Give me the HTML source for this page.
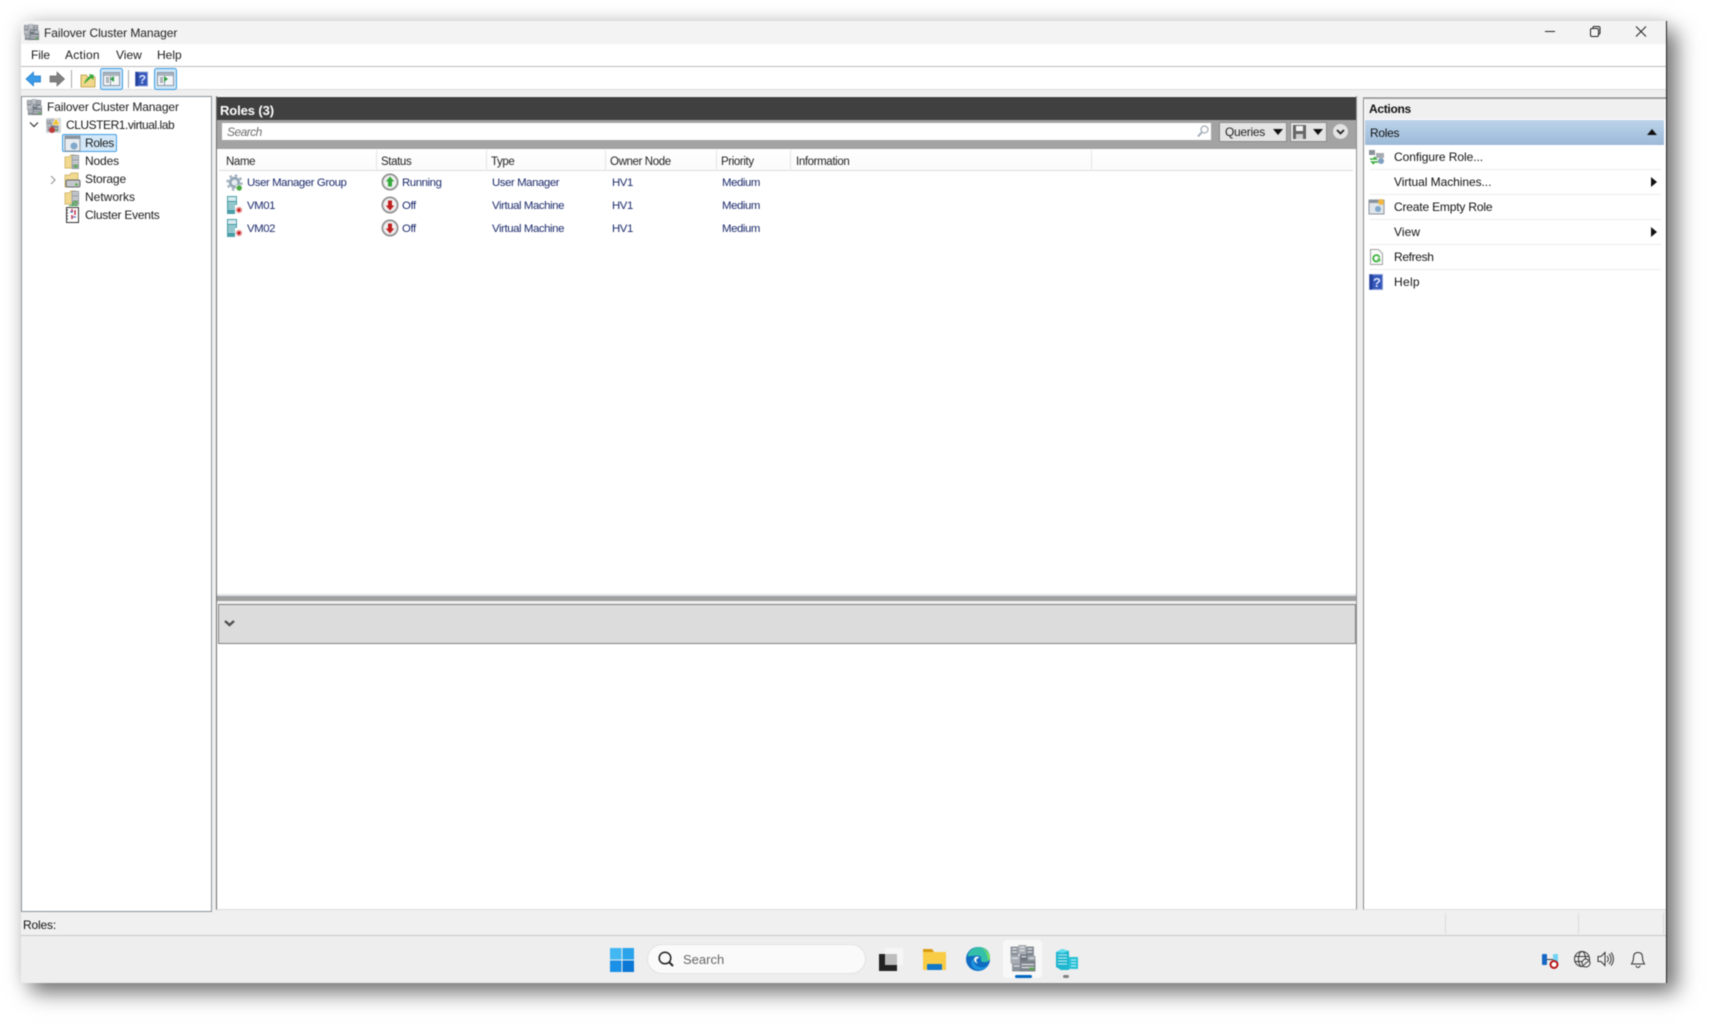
<!DOCTYPE html>
<html><head><meta charset="utf-8"><title>Failover Cluster Manager</title>
<style>
html,body{margin:0;padding:0;width:1709px;height:1025px;overflow:hidden;background:#fff}
#stage{position:absolute;left:0;top:0;width:1709px;height:1025px;filter:blur(.45px)}
#stage div,#stage span.t,#stage svg{position:absolute}
.t{position:absolute;font:12px/16px "Liberation Sans",sans-serif;color:#1a1a1a;white-space:nowrap}
.n{color:#1b2a6b;font-size:11.4px;letter-spacing:-.42px}
.h{color:#222;font-size:11.5px;letter-spacing:-.38px}
.a{color:#111;letter-spacing:-.06px}
</style></head><body>
<svg width="0" height="0" style="position:absolute">
<defs>
<symbol id="srv" viewBox="0 0 18 18"><rect x="1" y="1" width="5" height="6" fill="#8b9199"/><rect x="6" y="0" width="5" height="6" fill="#a7acb2"/><rect x="11" y="1" width="5" height="6" fill="#7f868e"/><rect x="1" y="7" width="6" height="5" fill="#a7acb2"/><rect x="7" y="6" width="5" height="5" fill="#6f767e"/><rect x="12" y="7" width="5" height="5" fill="#9ba1a8"/><rect x="2" y="12" width="7" height="5" fill="#8b9199"/><rect x="7" y="10" width="10" height="7" fill="#7b8289"/><path d="M2 2.500h3M7 1.500h3M12 2.500h3M2 4.500h3M7 3.500h3M12 4.500h3M2 8.500h4M8 7.500h3M13 8.500h3M3 13.500h4M8 12.500h8M8 14.500h8" stroke="#e1e4e7" stroke-width=".8"/><rect x="13" y="14.500" width="3" height="1.500" fill="#57a84a"/></symbol>
<symbol id="gear" viewBox="0 0 18 18"><circle cx="8.500" cy="8.500" r="4.300" fill="#e9eef2" stroke="#96a8b8" stroke-width="2.800"/><circle cx="8.500" cy="8.500" r="7" fill="none" stroke="#a3b2bf" stroke-width="2.400" stroke-dasharray="2.600 2.900"/><rect x="10" y="11" width="7" height="7" rx="1" fill="#fff"/><circle cx="13.200" cy="14" r="2.700" fill="#4aa83f"/></symbol>
<symbol id="vm" viewBox="0 0 18 18"><rect x="1" y="0" width="10" height="18" fill="#4a9fa8"/><rect x="2" y="1" width="8" height="4" fill="#d8eaee"/><path d="M2 7h8M2 9h8M2 11h8M2 13h8" stroke="#d8ecef"/><rect x="9" y="9" width="9" height="9" fill="#fff"/><circle cx="13" cy="14" r="3.200" fill="#e7a0a0"/><circle cx="13" cy="14" r="1.600" fill="#c81e1e"/></symbol>
<symbol id="up" viewBox="0 0 18 18"><circle cx="9" cy="9" r="7.700" fill="#e0e0e0" stroke="#8a8a8a" stroke-width="1.500"/><circle cx="9" cy="9" r="5.700" fill="#f2f2f2"/><path d="M9 3.500l4.300 5H11v5H7v-5H4.700z" fill="#34a83a"/></symbol>
<symbol id="down" viewBox="0 0 18 18"><circle cx="9" cy="9" r="7.700" fill="#e0e0e0" stroke="#8a8a8a" stroke-width="1.500"/><circle cx="9" cy="9" r="5.700" fill="#f2f2f2"/><path d="M9 14.500l-4.300-5H7v-5h4v5h2.300z" fill="#c01f1f"/></symbol>
<symbol id="fold" viewBox="0 0 18 18"><path d="M1 4h5l1-2h5v14H1z" fill="#f1d98f" stroke="#c7a95a" stroke-width=".7"/><rect x="8" y="2" width="8" height="15" fill="#9aa1a8"/><path d="M9 4h6M9 6h6M9 9h6M9 11h6" stroke="#e3e6e8"/><rect x="11" y="12.500" width="3" height="3" fill="#5bb04d"/></symbol>
<symbol id="help" viewBox="0 0 14 16"><rect x=".5" y=".5" width="13" height="15" fill="#3558ba" stroke="#8ea0d8"/><rect x=".5" y=".5" width="3" height="15" fill="#24409c"/><text x="4" y="13" font-family="Liberation Sans" font-size="13" font-weight="bold" fill="#dfe6ff">?</text></symbol>
<symbol id="pane" viewBox="0 0 17 14"><rect x=".5" y=".5" width="16" height="13" fill="#f4f6f8" stroke="#8e9aa6"/><rect x="1" y="1" width="15" height="3" fill="#aab4be"/><path d="M3 6h3M3 8h3M3 10h3" stroke="#66727e"/><path d="M7.500 4v9" stroke="#8e9aa6"/></symbol>
</defs></svg>
<div id="stage">
<!-- window -->
<div style="left:21px;top:21px;width:1645px;height:962px;background:#fff;box-shadow:10px 10px 20px rgba(0,0,0,.52),0 0 20px rgba(0,0,0,.13);border-right:1.500px solid #222;box-sizing:content-box"></div>
<div style="left:21px;top:21px;width:1645px;height:23px;background:#f3f3f3"></div>
<div style="left:21px;top:66px;width:1645px;height:1px;background:#bdbdbd"></div>
<div style="left:21px;top:89px;width:1645px;height:7px;background:#f0f0f0;border-top:1px solid #dcdcdc;box-sizing:border-box"></div>
<!-- title -->
<svg style="left:23px;top:24px" width="17" height="17"><use href="#srv" width="17" height="17"/></svg>
<span class="t" style="left:44px;top:25px;letter-spacing:-.06px;color:#222">Failover Cluster Manager</span>
<svg style="left:1540px;top:24px" width="120" height="16" fill="none" stroke="#222"><path d="M5 7.500h10"/><rect x="50.500" y="4.500" width="8" height="8" rx="1.500"/><path d="M53 4.500v-1a1 1 0 0 1 1-1h4.500a1.500 1.500 0 0 1 1.500 1.500v5a1 1 0 0 1-1 1h-1"/><path d="M96 2.500l10 10M106 2.500l-10 10"/></svg>
<!-- menu -->
<span class="t" style="left:31px;top:47px;letter-spacing:-.1px">File</span>
<span class="t" style="left:65px;top:47px;letter-spacing:.25px">Action</span>
<span class="t" style="left:116px;top:47px">View</span>
<span class="t" style="left:157px;top:47px">Help</span>
<!-- toolbar -->
<svg style="left:24px;top:68px" width="160" height="22">
<path d="M2 11l7.500-7v4h7v6h-7v4z" fill="#3a9be8" stroke="#1d78c8" stroke-width=".7"/>
<path d="M40.500 11l-7.500-7v4h-7v6h7v4z" fill="#808080" stroke="#6a6a6a" stroke-width=".7"/>
<path d="M47.500 2v18" stroke="#a8a8a8"/>
<path d="M57 7h5l2 2h7v10H57z" fill="#f0d88a" stroke="#b8983e" stroke-width=".8"/>
<path d="M60 16c1-4 3-6 6-8l-1-2 5 1-1 5-1.500-2c-2 1-4 3-7.500 6z" fill="#3aa83a"/>
<rect x="76.500" y=".5" width="22" height="21" rx="2" fill="#cde6f7" stroke="#3a9ae0"/>
<use href="#pane" x="79" y="4" width="17" height="14"/>
<path d="M90 8v6l-4-3z" fill="#2f9d3f"/>
<path d="M104.500 2v18" stroke="#a8a8a8"/>
<use href="#help" x="111" y="3" width="13" height="16"/>
<rect x="130.500" y=".5" width="22" height="21" rx="2" fill="#cde6f7" stroke="#3a9ae0"/>
<use href="#pane" x="133" y="4" width="17" height="14"/>
<path d="M140 8v6l4-3z" fill="#2f9d3f"/>
</svg>
<!-- tree panel -->
<div style="left:21px;top:96px;width:191px;height:816px;background:#fff;border:1px solid #8b939b;box-sizing:border-box"></div>
<svg style="left:26px;top:99px" width="17" height="17"><use href="#srv" width="17" height="17"/></svg>
<span class="t" style="left:47px;top:99px;letter-spacing:-.12px">Failover Cluster Manager</span>
<svg style="left:28px;top:119px" width="12" height="12" fill="none" stroke="#333" stroke-width="1.200"><path d="M2 3.500l4 4 4-4"/></svg>
<svg style="left:45px;top:117px" width="17" height="17"><rect x="1" y="1" width="15" height="15" fill="#d5d9dd"/><use href="#srv" width="13" height="13" x="1" y="2"/><path d="M11 1l4 7H7z" fill="#f0c430" stroke="#fff" stroke-width=".6"/><circle cx="7" cy="13" r="3" fill="#c23a3a"/></svg>
<span class="t" style="left:66px;top:117px;letter-spacing:-.46px">CLUSTER1.virtual.lab</span>
<div style="left:62px;top:134px;width:55px;height:18px;background:#d2e8f8;border:1px solid #3f9fe3;border-radius:2px;box-sizing:border-box"></div>
<svg style="left:64px;top:135px" width="17" height="17"><rect x="1" y="1" width="15" height="15" fill="#e8ecf0" stroke="#8a949e"/><rect x="1" y="1" width="15" height="3" fill="#8a949e"/><circle cx="10" cy="11" r="3.500" fill="#7fa8cc"/></svg>
<span class="t" style="left:85px;top:135px;letter-spacing:-.35px">Roles</span>
<svg style="left:64px;top:153px" width="17" height="17"><use href="#fold" width="17" height="17"/></svg>
<span class="t" style="left:85px;top:153px;letter-spacing:-.15px">Nodes</span>
<svg style="left:47px;top:174px" width="12" height="12" fill="none" stroke="#999" stroke-width="1.200"><path d="M4 2l4 4-4 4"/></svg>
<svg style="left:64px;top:171px" width="17" height="17"><path d="M1 4h5l1-2h7v14H1z" fill="#f1d98f" stroke="#c7a95a" stroke-width=".7"/><rect x="2" y="9" width="14" height="7" rx="1.500" fill="#c4c8cc" stroke="#666"/><rect x="11" y="12.500" width="3" height="2" fill="#5bb04d"/></svg>
<span class="t" style="left:85px;top:171px;letter-spacing:-.15px">Storage</span>
<svg style="left:64px;top:189px" width="17" height="17"><use href="#fold" width="17" height="17"/><path d="M9 13v3M5 16.500h9" stroke="#37a846"/></svg>
<span class="t" style="left:85px;top:189px">Networks</span>
<svg style="left:65px;top:207px" width="15" height="17"><rect x="1.500" y=".5" width="12" height="15" fill="#fff" stroke="#333"/><path d="M1 3h2M1 6h2M1 9h2M1 12h2" stroke="#333"/><path d="M7 2v3M10 3v5M7 8v4" stroke="#c22d4a" stroke-width="1.500"/><path d="M5 5h3M8 10h3" stroke="#2d57c2"/></svg>
<span class="t" style="left:85px;top:207px;letter-spacing:-.25px">Cluster Events</span>
<!-- middle panel -->
<div style="left:212px;top:96px;width:4px;height:816px;background:#efefef"></div>
<div style="left:216px;top:96px;width:1141px;height:814px;background:#fff;border-left:1.500px solid #6c6c6c;border-right:1px solid #8f8f8f;border-bottom:1px solid #dedede;box-sizing:border-box"></div>
<div style="left:217px;top:97px;width:1139px;height:23px;background:#404040"></div>
<span class="t" style="left:220px;top:103px;color:#fff;font-weight:bold;font-size:13px;letter-spacing:-.1px">Roles (3)</span>
<div style="left:217px;top:120px;width:1139px;height:29px;background:#a3a3a3"></div>
<div style="left:222px;top:123px;width:989px;height:17px;background:#fff"></div>
<span class="t" style="left:227px;top:124px;font-style:italic;color:#6f6f6f;letter-spacing:-.55px">Search</span>
<svg style="left:1196px;top:124px" width="14" height="15" fill="none" stroke="#a5aeb8"><circle cx="8.500" cy="5.500" r="3.500" stroke-width="1.300"/><path d="M6 8l-4 4.500" stroke-width="2"/></svg>
<div style="left:1219px;top:122px;width:68px;height:20px;background:#e4e4e4;border:1px solid #8a8a8a;box-sizing:border-box"></div>
<span class="t" style="left:1225px;top:124px;color:#222;letter-spacing:-.3px">Queries</span>
<svg style="left:1272px;top:128px" width="12" height="8"><path d="M1 1h10L6 7z" fill="#111"/></svg>
<div style="left:1290px;top:122px;width:37px;height:20px;background:#e4e4e4;border:1px solid #8a8a8a;box-sizing:border-box"></div>
<svg style="left:1292px;top:124px" width="16" height="16"><rect x="1" y="1" width="13" height="14" fill="#666"/><rect x="4" y="2" width="7" height="5" fill="#f4f4f4"/><rect x="4" y="10" width="7" height="5" fill="#cfcfcf"/></svg>
<svg style="left:1312px;top:128px" width="12" height="8"><path d="M1 1h10L6 7z" fill="#111"/></svg>
<svg style="left:1332px;top:123px" width="17" height="17"><circle cx="8.500" cy="8.500" r="7.500" fill="#e3e3e3"/><path d="M5 7l3.500 3.500L12 7" fill="none" stroke="#222" stroke-width="1.800"/></svg>
<!-- table header -->
<div style="left:219px;top:149px;width:1134px;height:22px;background:linear-gradient(#fff,#fbfbfb);border-bottom:1px solid #dedede;box-sizing:border-box"></div>
<div style="left:376px;top:150px;width:1px;height:21px;background:#e4e4e4"></div>
<div style="left:486px;top:150px;width:1px;height:21px;background:#e4e4e4"></div>
<div style="left:605px;top:150px;width:1px;height:21px;background:#e4e4e4"></div>
<div style="left:716px;top:150px;width:1px;height:21px;background:#e4e4e4"></div>
<div style="left:790px;top:150px;width:1px;height:21px;background:#e4e4e4"></div>
<div style="left:1091px;top:150px;width:1px;height:21px;background:#e4e4e4"></div>
<span class="t h" style="left:226px;top:154px">Name</span>
<span class="t h" style="left:381px;top:154px">Status</span>
<span class="t h" style="left:491px;top:154px">Type</span>
<span class="t h" style="left:610px;top:154px">Owner Node</span>
<span class="t h" style="left:721px;top:154px">Priority</span>
<span class="t h" style="left:796px;top:154px">Information</span>
<!-- rows -->
<svg style="left:226px;top:174px" width="18" height="18"><use href="#gear" width="18" height="18"/></svg>
<span class="t n" style="left:247px;top:175px">User Manager Group</span>
<svg style="left:381px;top:173px" width="18" height="18"><use href="#up" width="18" height="18"/></svg>
<span class="t n" style="left:402px;top:175px">Running</span>
<span class="t n" style="left:492px;top:175px">User Manager</span>
<span class="t n" style="left:612px;top:175px">HV1</span>
<span class="t n" style="left:722px;top:175px">Medium</span>
<svg style="left:226px;top:196px" width="18" height="18"><use href="#vm" width="18" height="18"/></svg>
<span class="t n" style="left:247px;top:198px">VM01</span>
<svg style="left:381px;top:196px" width="18" height="18"><use href="#down" width="18" height="18"/></svg>
<span class="t n" style="left:402px;top:198px">Off</span>
<span class="t n" style="left:492px;top:198px">Virtual Machine</span>
<span class="t n" style="left:612px;top:198px">HV1</span>
<span class="t n" style="left:722px;top:198px">Medium</span>
<svg style="left:226px;top:219px" width="18" height="18"><use href="#vm" width="18" height="18"/></svg>
<span class="t n" style="left:247px;top:221px">VM02</span>
<svg style="left:381px;top:219px" width="18" height="18"><use href="#down" width="18" height="18"/></svg>
<span class="t n" style="left:402px;top:221px">Off</span>
<span class="t n" style="left:492px;top:221px">Virtual Machine</span>
<span class="t n" style="left:612px;top:221px">HV1</span>
<span class="t n" style="left:722px;top:221px">Medium</span>
<!-- splitter -->
<div style="left:217px;top:594px;width:1139px;height:2px;background:#dfe3e8"></div>
<div style="left:217px;top:596px;width:1139px;height:5px;background:#a0a0a0"></div>
<div style="left:217px;top:601px;width:1139px;height:3px;background:#efefef"></div>
<div style="left:218px;top:604px;width:1138px;height:40px;background:#dcdcdc;border:1px solid #808080;box-sizing:border-box"></div>
<svg style="left:223px;top:619px" width="13" height="9"><path d="M2 2l4.500 4L11 2" fill="none" stroke="#505050" stroke-width="2.400"/></svg>
<!-- actions panel -->
<div style="left:1357px;top:96px;width:6px;height:816px;background:#efefef"></div>
<div style="left:1363px;top:97px;width:303px;height:813px;background:#fff;border-left:1.500px solid #8a8a8a;border-bottom:1px solid #dedede;box-sizing:border-box"></div>
<div style="left:1363px;top:97px;width:303px;height:2px;background:#a0a0a0"></div>
<div style="left:1365px;top:99px;width:300px;height:20px;background:#f0f0f0"></div>
<span class="t" style="left:1369px;top:101px;font-weight:bold;color:#111;letter-spacing:-.3px">Actions</span>
<div style="left:1365px;top:120px;width:299px;height:25px;background:linear-gradient(#bcd4ea,#9cb9d8)"></div>
<span class="t a" style="left:1370px;top:125px;letter-spacing:-.3px">Roles</span>
<svg style="left:1646px;top:128px" width="12" height="8"><path d="M6 1l5 6H1z" fill="#111"/></svg>
<div style="left:1370px;top:169px;width:291px;height:1px;background:#ececec"></div>
<div style="left:1370px;top:194px;width:291px;height:1px;background:#ececec"></div>
<div style="left:1370px;top:219px;width:291px;height:1px;background:#ececec"></div>
<div style="left:1370px;top:244px;width:291px;height:1px;background:#ececec"></div>
<div style="left:1370px;top:269px;width:291px;height:1px;background:#ececec"></div>
<svg style="left:1368px;top:149px" width="17" height="16"><rect x="1" y="1" width="6" height="5" fill="#8b9199"/><rect x="8" y="4" width="8" height="5" fill="#a7acb2"/><path d="M2 10h6l-2-2M10 13H4l2 2" fill="none" stroke="#3aa83a" stroke-width="1.600"/><circle cx="13" cy="12" r="3" fill="#7fa0c0"/></svg>
<span class="t a" style="left:1394px;top:149px">Configure Role...</span>
<span class="t a" style="left:1394px;top:174px">Virtual Machines...</span>
<svg style="left:1650px;top:176px" width="8" height="12"><path d="M1 1l6 5-6 5z" fill="#111"/></svg>
<svg style="left:1368px;top:199px" width="17" height="16"><rect x="1" y="1" width="15" height="14" fill="#dfe5ea" stroke="#8a949e"/><rect x="1" y="1" width="15" height="3" fill="#8a949e"/><circle cx="10" cy="10" r="3" fill="#7fa8cc"/><circle cx="13" cy="3" r="3" fill="#f0b840"/></svg>
<span class="t a" style="left:1394px;top:199px;letter-spacing:-.18px">Create Empty Role</span>
<span class="t a" style="left:1394px;top:224px;letter-spacing:.1px">View</span>
<svg style="left:1650px;top:226px" width="8" height="12"><path d="M1 1l6 5-6 5z" fill="#111"/></svg>
<svg style="left:1369px;top:249px" width="15" height="16"><path d="M1.500.5h8l4 4v11h-12z" fill="#fafafa" stroke="#a0a0a0"/><path d="M10.500 8.500a3.200 3.200 0 1 0-1 3.200" fill="none" stroke="#34b234" stroke-width="1.700"/><path d="M8 10l3-1 .5 4z" fill="#34b234"/></svg>
<span class="t a" style="left:1394px;top:249px;letter-spacing:-.35px">Refresh</span>
<svg style="left:1369px;top:274px" width="14" height="16"><use href="#help" width="14" height="16"/></svg>
<span class="t a" style="left:1394px;top:274px;letter-spacing:.3px">Help</span>
<!-- status bar -->
<div style="left:21px;top:912px;width:1645px;height:24px;background:#f0f0f0;border-bottom:1px solid #c8c8c8;box-sizing:border-box"></div>
<div style="left:21px;top:910px;width:1645px;height:2px;background:#f0f0f0"></div>
<div style="left:21px;top:905px;width:191px;height:7px;background:#fff;border:1px solid #8b939b;border-top:0;box-sizing:border-box"></div>
<div style="left:1445px;top:913px;width:1px;height:21px;background:#dadada"></div>
<div style="left:1578px;top:913px;width:1px;height:21px;background:#dadada"></div>
<div style="left:1663px;top:913px;width:1px;height:21px;background:#dadada"></div>
<span class="t a" style="left:23px;top:917px;letter-spacing:-.17px">Roles:</span>
<!-- taskbar -->
<div style="left:21px;top:936px;width:1645px;height:47px;background:#eeeeee"></div>
<svg style="left:610px;top:948px" width="24" height="24"><rect x="0" y="0" width="11.500" height="11.500" fill="#43b7f2"/><rect x="12.500" y="0" width="11.500" height="11.500" fill="#2aa3ea"/><rect x="0" y="12.500" width="11.500" height="11.500" fill="#1a90e6"/><rect x="12.500" y="12.500" width="11.500" height="11.500" fill="#0a78d4"/></svg>
<div style="left:647px;top:944px;width:219px;height:30px;background:#fafafa;border:1px solid #e2e2e2;border-radius:15px;box-sizing:border-box"></div>
<svg style="left:657px;top:950px" width="18" height="18" fill="none" stroke="#222" stroke-width="1.500"><circle cx="8" cy="8" r="5.800"/><path d="M12.200 12.200L16 16" stroke-width="2"/></svg>
<span class="t" style="left:683px;top:952px;font-size:13px;color:#666">Search</span>
<svg style="left:878px;top:947px" width="26" height="25"><rect x="7" y="1" width="18" height="17" fill="#f6f6f6"/><rect x="1" y="7" width="18" height="17" fill="#222"/><rect x="7" y="7" width="12" height="11" fill="#bdbdbd"/></svg>
<svg style="left:922px;top:948px" width="25" height="23"><path d="M1 1h9l2 3h12v18H1z" fill="#f9cc45"/><path d="M1 1h9l2 3H1z" fill="#d99a12"/><rect x="5" y="16" width="15" height="6" rx="1" fill="#0f76c9"/></svg>
<svg style="left:965px;top:946px" width="26" height="26"><circle cx="13" cy="13" r="12" fill="#0f6cc2"/><path d="M2.500 10C4 4 9 1 14 1c3 0 6 1 8 3 2 2 3 5 3 8 0 1-.5 2-1.500 3-1.500 1-4 1.500-6 1-1.500-.5-2-1.500-1.500-3 .5-2-1-3.500-3.500-3.500-4 0-7 1-10.500.5z" fill="#33bfa8"/><path d="M17 2c4 1.500 7 5 8 9 0 2-1 3-2 4 0-5-2-10-6-13z" fill="#7fdc5c"/><path d="M8.500 12c-1 5 3 9.500 8.500 9.500 2 0 4-.7 5.500-2-3 4.500-9 5.500-13 3-4-2.500-4-8-1-10.500z" fill="#1f97e0"/><path d="M12 10.500c-1.800 0-3.200 1.500-3 3.500.2 1.800 2 3 4 3.500-1.500-1.500-2-3-1.500-4 .4-1 1.500-1.500 3-1.500-.5-1-1.500-1.500-2.500-1.500z" fill="#eef6f8"/></svg>
<div style="left:1003px;top:940px;width:39px;height:38px;background:#f8f8f8;border-radius:4px"></div>
<svg style="left:1009px;top:945px" width="28" height="28"><use href="#srv" width="28" height="28"/></svg>
<div style="left:1015px;top:975px;width:17px;height:3px;background:#0067c0;border-radius:2px"></div>
<svg style="left:1055px;top:945px" width="24" height="25"><path d="M1 7l6-3 7 2v19H6l-5-3z" fill="#1fb6cf"/><path d="M1 7l6-3 7 2-6 2z" fill="#5fdcec"/><path d="M3 10h9M3 13h9M3 16h9M3 19h9" stroke="#c6f0f6"/><rect x="14" y="12" width="9" height="12" fill="#2ac2d6"/><path d="M16 15h5M16 18h5M16 21h5" stroke="#c6f0f6"/></svg>
<div style="left:1063px;top:975px;width:6px;height:2.500px;background:#808080;border-radius:2px"></div>
<!-- tray -->
<svg style="left:1541px;top:952px" width="19" height="18"><rect x="1" y="2" width="5" height="11" rx="1" fill="#1668c4"/><rect x="12" y="2" width="5" height="11" rx="1" fill="#6fd3f5"/><path d="M6 7.500h6" stroke="#333"/><circle cx="13" cy="12.500" r="3.500" fill="#fff" stroke="#b81414" stroke-width="2"/></svg>
<svg style="left:1573px;top:950px" width="18" height="18" fill="none" stroke="#333"><circle cx="9" cy="9" r="7.500"/><ellipse cx="9" cy="9" rx="3.500" ry="7.500"/><path d="M2 6.500h14M2 11.500h14"/><circle cx="13" cy="13" r="4" fill="#eee"/><path d="M10.500 15l5-4"/></svg>
<svg style="left:1597px;top:951px" width="17" height="16" fill="none" stroke="#333"><path d="M1 5.500h3L8 1.500v13l-4-4H1z"/><path d="M10 5a4 4 0 0 1 0 6M12 3a7 7 0 0 1 0 10M14 1.500a10 10 0 0 1 0 13"/></svg>
<svg style="left:1630px;top:951px" width="16" height="17" fill="none" stroke="#333"><path d="M8 1.500c-3 0-4.500 2-4.500 5 0 3-1 5-2 6.500h13c-1-1.500-2-3.500-2-6.500 0-3-1.500-5-4.500-5z"/><path d="M6 14.500a2 2 0 0 0 4 0"/></svg>
</div>
</body></html>
